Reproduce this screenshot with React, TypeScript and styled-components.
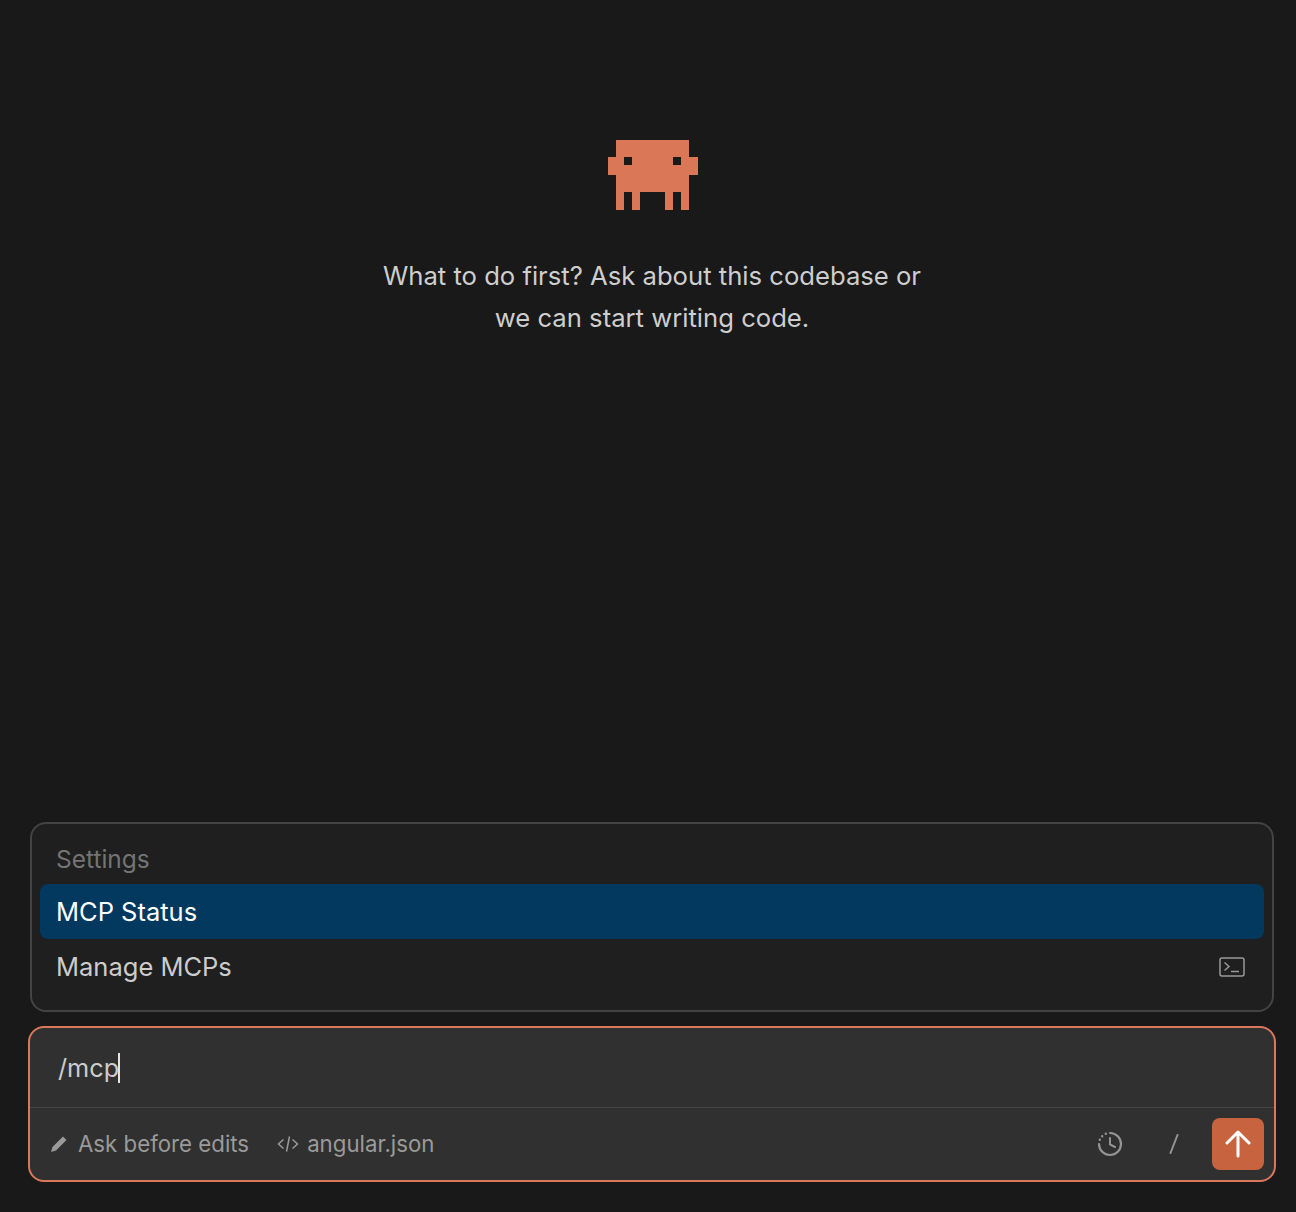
import React from "react";
import styled, { createGlobalStyle } from "styled-components";

const Global = createGlobalStyle`
  html, body { margin: 0; padding: 0; background: #191919; }
  * { box-sizing: border-box; }
`;

const Page = styled.div`
  width: 1296px;
  height: 1212px;
  background: #191919;
  font-family: Inter, "Liberation Sans", sans-serif;
  display: flex;
  flex-direction: column;
  overflow: hidden;
`;

const Welcome = styled.section`
  flex: 0 0 822px;
  display: flex;
  flex-direction: column;
  align-items: center;
  padding-top: 140px;
`;

const Logo = styled.svg`
  display: block;
  width: 90px;
  height: 70px;
  margin-left: 9px;
`;

const Intro = styled.p`
  margin: 45px 0 0 8px;
  width: 700px;
  text-align: center;
  font-size: 25.65px;
  line-height: 42px;
  color: #cecece;
`;

const Menu = styled.section`
  height: 190px;
  margin: 0 22px 0 30px;
  padding: 9px 8px;
  background: #1f1f1f;
  border: 2px solid #434343;
  border-radius: 16px;
`;

const MenuTitle = styled.div`
  height: 51px;
  padding: 8px 0 0 16px;
  font-size: 24.5px;
  line-height: 36px;
  color: #747474;
`;

const MenuItem = styled.div<{ $active?: boolean }>`
  height: 55px;
  padding: 0 19px 0 16px;
  display: flex;
  align-items: center;
  justify-content: space-between;
  border-radius: 8px;
  font-size: 25.5px;
  background: ${(p) => (p.$active ? "#03385f" : "transparent")};
  color: ${(p) => (p.$active ? "#ffffff" : "#cccccc")};
`;

const Composer = styled.section`
  height: 156px;
  margin: 14px 20px 0 28px;
  background: #303030;
  border: 2px solid #d9785a;
  border-radius: 16px;
  display: flex;
  flex-direction: column;
`;

const InputRow = styled.div`
  height: 80px;
  padding: 19px 0 0 28px;
  display: flex;
  align-items: flex-start;
  border-bottom: 1px solid #454545;
  font-size: 25.3px;
  line-height: 42px;
  color: #cccccc;
`;

const Caret = styled.span`
  display: inline-block;
  width: 2px;
  height: 30px;
  margin: 6px 0 0 -1px;
  background: #e4e4e4;
`;

const Toolbar = styled.div`
  flex: 1;
  display: flex;
  align-items: center;
  padding: 0 10px 0 20px;
`;

const Tool = styled.div<{ $gap: number; $end: number }>`
  display: flex;
  align-items: center;
  gap: ${(p) => p.$gap}px;
  margin-right: ${(p) => p.$end}px;
  font-size: 22.25px;
  line-height: 26px;
  padding-bottom: 1px;
  color: #9a9a9a;
`;

const Spacer = styled.div`
  flex: 1;
`;

const IconSlot = styled.div<{ $end: number }>`
  display: flex;
  margin-right: ${(p) => p.$end}px;
`;

const Send = styled.button`
  width: 52px;
  height: 52px;
  padding: 0;
  display: flex;
  align-items: center;
  justify-content: center;
  background: #c8633f;
  border: 0;
  border-radius: 8px;
`;

export default function App() {
  return (
    <Page>
      <Global />
      <Welcome>
        <Logo viewBox="0 0 90 70" shapeRendering="crispEdges">
          <path
            fill="#d97757"
            fillRule="evenodd"
            d="M8 0H81V17H90V35H81V70H73V52H65V70H57V52H32V70H24V52H16V70H8V35H0V17H8ZM16 17V25H24V17ZM65 17V25H73V17Z"
          />
        </Logo>
        <Intro>
          What to do first? Ask about this codebase or
          <br />
          we can start writing code.
        </Intro>
      </Welcome>
      <Menu>
        <MenuTitle>Settings</MenuTitle>
        <MenuItem $active>MCP Status</MenuItem>
        <MenuItem>
          Manage MCPs
          <svg width="26" height="20" viewBox="0 0 26 20" fill="none" stroke="#999" strokeWidth="1.5">
            <rect x="1" y="1" width="24" height="18" rx="2" />
            <path d="M5.5 5.5 10 9.5 5.5 13.5M12 14.5H20" />
          </svg>
        </MenuItem>
      </Menu>
      <Composer>
        <InputRow>
          /mcp
          <Caret />
        </InputRow>
        <Toolbar>
          <Tool $gap={10} $end={28}>
            <svg width="18" height="18" viewBox="0 0 18 18" fill="#9a9a9a">
              <path d="M13 1.5 16.5 5 6 15.5 1 17 2.5 12Z" />
            </svg>
            Ask before edits
          </Tool>
          <Tool $gap={8} $end={0}>
            <svg width="22" height="18" viewBox="0 0 22 18" fill="none" stroke="#9a9a9a" strokeWidth="1.5">
              <path d="M6.5 4.5 1.5 9 6.5 13.5M15.5 4.5 20.5 9 15.5 13.5M12.5 1.5 9.5 16.5" />
            </svg>
            angular.json
          </Tool>
          <Spacer />
          <IconSlot $end={46}>
            <svg width="26" height="26" viewBox="0 0 26 26" fill="none" stroke="#949494" strokeWidth="2.2" strokeLinecap="round">
              <path d="M13 2A11 11 0 1 1 2 13" />
              <path d="M2.8 8.8v0M5.2 5.2v0M8.8 2.8v0" strokeWidth="2.4" />
              <path d="M13 7V13.5L18 16" strokeWidth="2" />
            </svg>
          </IconSlot>
          <IconSlot $end={33}>
            <svg width="10" height="20" viewBox="0 0 10 20" fill="none" stroke="#949494" strokeWidth="2" strokeLinecap="round">
              <path d="M8.5 1 1.5 19" />
            </svg>
          </IconSlot>
          <Send aria-label="Send">
            <svg width="26" height="28" viewBox="0 0 26 28" fill="none" stroke="#fff" strokeWidth="3" strokeLinecap="round" strokeLinejoin="round">
              <path d="M13 2V26M2 13 13 2 24 13" />
            </svg>
          </Send>
        </Toolbar>
      </Composer>
    </Page>
  );
}
